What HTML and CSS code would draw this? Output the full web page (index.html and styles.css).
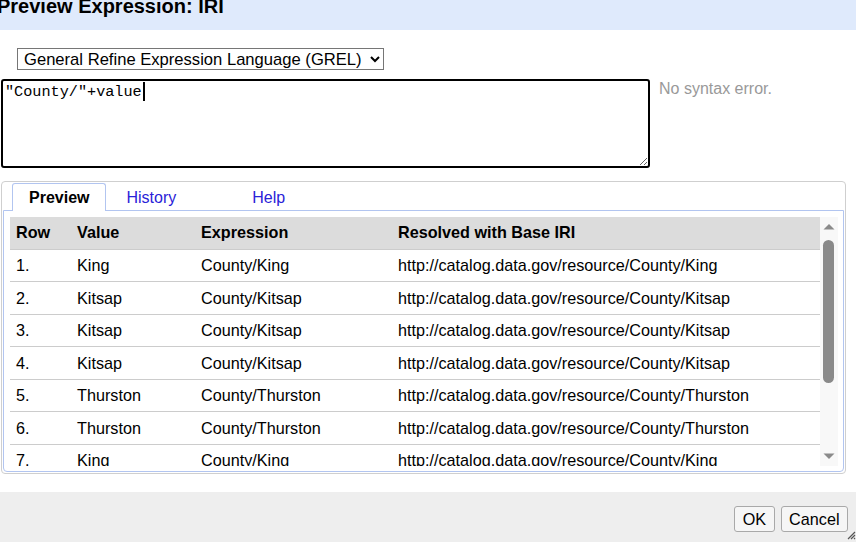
FILE: index.html
```html
<!DOCTYPE html>
<html>
<head>
<meta charset="utf-8">
<title>Preview Expression: IRI</title>
<link rel="stylesheet" href="styles.css">
</head>
<body>
<div class="dialog">
  <div class="dialog-header">
    <h1 class="dialog-title">Preview Expression: IRI</h1>
  </div>
  <div class="dialog-body">
    <div class="lang-row">
      <select class="lang-select">
        <option>General Refine Expression Language (GREL)</option>
      </select>
    </div>
    <div class="expr-row">
      <div class="expr-wrap">
        <textarea class="expr-input" spellcheck="false">"County/"+value</textarea>
        <span class="caret"></span>
      </div>
      <div class="expr-status">No syntax error.</div>
    </div>
    <div class="tabs">
      <div class="tab-nav">
        <span class="tab tab-active">Preview</span>
        <span class="tab tab-history">History</span>
        <span class="tab">Help</span>
      </div>
      <div class="tab-panel">
        <div class="table-scroll">
          <div class="table-clip">
            <table class="preview-table">
              <colgroup>
                <col class="c-row"><col class="c-val"><col class="c-expr"><col class="c-iri">
              </colgroup>
              <thead>
                <tr><th>Row</th><th>Value</th><th>Expression</th><th>Resolved with Base IRI</th></tr>
              </thead>
              <tbody>
                <tr><td>1.</td><td>King</td><td>County/King</td><td>http://catalog.data.gov/resource/County/King</td></tr>
                <tr><td>2.</td><td>Kitsap</td><td>County/Kitsap</td><td>http://catalog.data.gov/resource/County/Kitsap</td></tr>
                <tr><td>3.</td><td>Kitsap</td><td>County/Kitsap</td><td>http://catalog.data.gov/resource/County/Kitsap</td></tr>
                <tr><td>4.</td><td>Kitsap</td><td>County/Kitsap</td><td>http://catalog.data.gov/resource/County/Kitsap</td></tr>
                <tr><td>5.</td><td>Thurston</td><td>County/Thurston</td><td>http://catalog.data.gov/resource/County/Thurston</td></tr>
                <tr><td>6.</td><td>Thurston</td><td>County/Thurston</td><td>http://catalog.data.gov/resource/County/Thurston</td></tr>
                <tr><td>7.</td><td>King</td><td>County/King</td><td>http://catalog.data.gov/resource/County/King</td></tr>
                <tr><td>8.</td><td>King</td><td>County/King</td><td>http://catalog.data.gov/resource/County/King</td></tr>
              </tbody>
            </table>
          </div>
          <div class="scrollbar">
            <svg class="sb-arrow" width="18" height="18" viewBox="0 0 18 18"><path d="M3.5 12.5 L9 7 L14.5 12.5 Z" fill="#8a8a8a"/></svg>
            <div class="sb-track"><div class="sb-thumb"></div></div>
            <svg class="sb-arrow" width="18" height="18" viewBox="0 0 18 18"><path d="M3.5 5.5 L9 11 L14.5 5.5 Z" fill="#8a8a8a"/></svg>
          </div>
        </div>
      </div>
    </div>
  </div>
  <div class="dialog-footer">
    <button class="btn">OK</button>
    <button class="btn">Cancel</button>
    <svg class="grip" width="10" height="10" viewBox="0 0 10 10"><path d="M9 2 L2 9 M9 5 L5 9 M9 8 L8 9" stroke="#555" stroke-width="1.2"/></svg>
  </div>
</div>
</body>
</html>
```

FILE: styles.css
```css
html, body {
  margin: 0;
  padding: 0;
  background: #ffffff;
}

body {
  font-family: "Liberation Sans", Arial, sans-serif;
  font-size: 16px;
  color: #000;
}

.dialog {
  width: 856px;
  height: 542px;
  display: flex;
  flex-direction: column;
  overflow: hidden;
  position: relative;
}

.dialog-header {
  height: 30px;
  flex: none;
  background: #dfeafc;
  overflow: hidden;
}

.dialog-title {
  margin: -4px 0 0 -3px;
  font-size: 20px;
  line-height: 20px;
  font-weight: bold;
  white-space: nowrap;
}

.dialog-body {
  flex: 1;
  padding: 18px 10px 0 1px;
  display: flex;
  flex-direction: column;
}

.lang-row {
  padding-left: 16px;
  height: 22px;
}

.lang-select {
  width: 367px;
  height: 22px;
  font-family: "Liberation Sans", Arial, sans-serif;
  font-size: 16.6px;
  color: #000;
  background: #fff;
  border: 1px solid #767676;
  border-radius: 0;
  padding: 0 0 0 2px;
  margin: 0;
}

.expr-row {
  margin-top: 9px;
  display: flex;
  align-items: flex-start;
}

.expr-wrap {
  position: relative;
  width: 649px;
  height: 89px;
  flex: none;
}

.expr-input {
  box-sizing: border-box;
  width: 649px;
  height: 89px;
  margin: 0;
  border: 2px solid #000;
  border-radius: 3px;
  padding: 2px 2px;
  font-family: "Liberation Mono", "DejaVu Sans Mono", monospace;
  font-size: 15.2px;
  line-height: 18px;
  color: #000;
  outline: none;
  resize: both;
  display: block;
}

.caret {
  position: absolute;
  left: 142px;
  top: 3px;
  width: 2px;
  height: 19px;
  background: #000;
}

.expr-status {
  margin-left: 9px;
  color: #999999;
  font-size: 16px;
  line-height: 18px;
  padding-top: 1px;
}

.tabs {
  margin-top: 13px;
  width: 845px;
  height: 293px;
  box-sizing: border-box;
  border: 1px solid #cfcfcf;
  border-radius: 4px;
  display: flex;
  flex-direction: column;
  padding: 1px 1px 1px 1px;
}

.tab-nav {
  display: flex;
  padding-left: 9px;
  height: 27px;
  position: relative;
  z-index: 1;
}

.tab {
  box-sizing: border-box;
  height: 28px;
  padding: 3px 16px 0 16px;
  border: 1px solid transparent;
  border-bottom: none;
  border-radius: 3px 3px 0 0;
  color: #2a22d8;
  font-size: 16px;
  line-height: 22px;
  margin-right: 4px;
  white-space: nowrap;
}

.tab-active {
  background: #fff;
  border-color: #b2c5f0;
  color: #000;
  font-weight: bold;
}

.tab-history {
  margin-left: -1px;
  margin-right: 42px;
}

.tab-panel {
  flex: 1;
  border: 1px solid #b2c5f0;
  border-radius: 0 0 4px 4px;
  padding: 6px 5px 5px 6px;
  min-height: 0;
}

.table-scroll {
  display: flex;
  height: 249px;
}

.table-clip {
  flex: 1;
  overflow: hidden;
}

.preview-table {
  width: 100%;
  border-collapse: collapse;
  table-layout: fixed;
  font-size: 16.2px;
}

.c-row { width: 61px; }
.c-val { width: 124px; }
.c-expr { width: 197px; }
.c-iri { width: auto; }

.preview-table th {
  background: #dcdcdc;
  text-align: left;
  font-weight: bold;
  height: 32px;
  padding: 0 0 0 6px;
  border-bottom: 1px solid #cccccc;
  box-sizing: border-box;
  white-space: nowrap;
}

.preview-table td {
  height: 32.5px;
  padding: 1px 0 0 6px;
  border-bottom: 1px solid #cccccc;
  box-sizing: border-box;
  white-space: nowrap;
  overflow: hidden;
}

.scrollbar {
  width: 18px;
  flex: none;
  background: #f8f8f8;
  display: flex;
  flex-direction: column;
}

.sb-arrow {
  display: block;
  flex: none;
}

.sb-track {
  flex: 1;
  padding: 5px 0 0 3px;
}

.sb-thumb {
  width: 11px;
  height: 143px;
  border-radius: 6px;
  background: #8a8a8a;
}

.dialog-footer {
  height: 50px;
  flex: none;
  background: #eeeeee;
  display: flex;
  justify-content: flex-end;
  align-items: flex-end;
  gap: 6px;
  padding: 0 8px 10px 0;
  box-sizing: border-box;
  position: relative;
}

.btn {
  height: 26px;
  box-sizing: border-box;
  font-family: "Liberation Sans", Arial, sans-serif;
  font-size: 16.2px;
  color: #000;
  background: #f6f6f6;
  border: 1px solid #a9a9a9;
  border-radius: 3px;
  padding: 0 7.5px;
  margin: 0;
}

.grip {
  position: absolute;
  right: 0;
  bottom: 2px;
}
```
